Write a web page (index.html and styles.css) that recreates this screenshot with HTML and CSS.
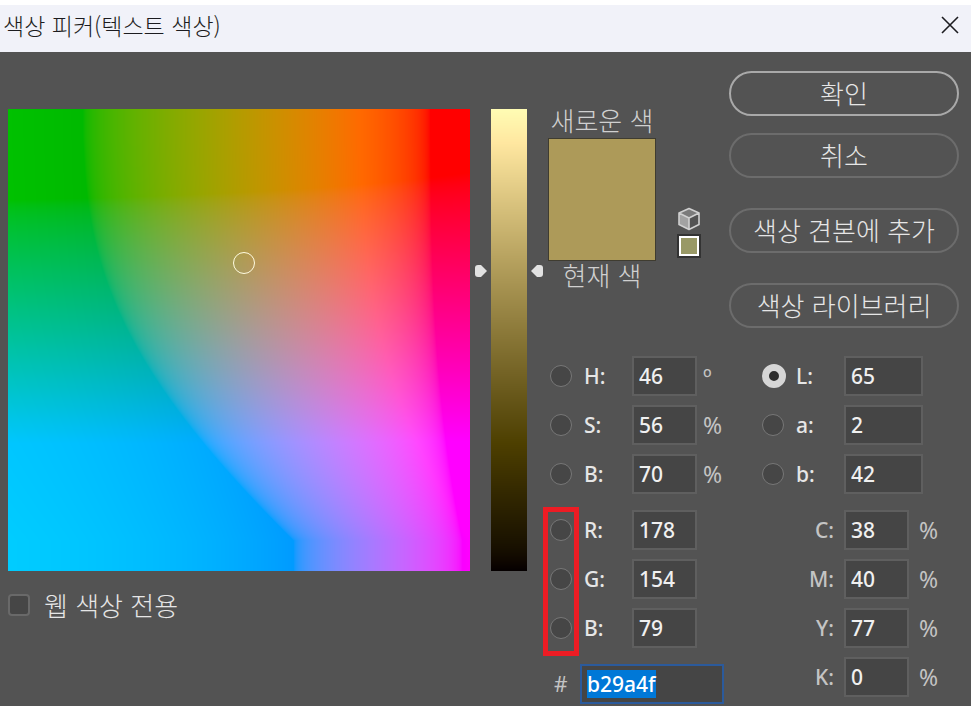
FILE: index.html
```html
<!DOCTYPE html>
<html lang="ko">
<head>
    <meta charset="UTF-8">
    <meta name="viewport" content="width=device-width, initial-scale=1.0">
    <title>색상 피커(텍스트 색상)</title>
    <link rel="stylesheet" href="styles.css">
</head>
<body>
    <header class="titlebar">
        <h1>색상 피커(텍스트 색상)</h1>
        <button class="close" type="button" aria-label="닫기">
            <svg width="18" height="18" viewBox="0 0 18 18"><path d="M1 1 17 17M17 1 1 17" fill="none" stroke="#1c1c20" stroke-width="1.6"/></svg>
        </button>
    </header>

    <main class="picker">
        <section class="field">
            <div class="spectrum">
                <canvas id="spectrum" width="462" height="462"></canvas>
                <span class="marker"></span>
            </div>
            <label class="web-only"><input type="checkbox"> 웹 색상 전용</label>
        </section>

        <section class="slider">
            <canvas id="lightness" width="1" height="462"></canvas>
            <svg class="arrow arrow-left" width="12" height="14" viewBox="0 0 12 14"><path d="M3 1h3l6 6-6 6H3Q0 13 0 10V4Q0 1 3 1z" fill="#e2e2e2"/></svg>
            <svg class="arrow arrow-right" width="12" height="14" viewBox="0 0 12 14"><path d="M9 1H6L0 7l6 6h3q3 0 3-3V4q0-3-3-3z" fill="#e2e2e2"/></svg>
        </section>

        <section class="side">
            <div class="top">
                <div class="preview">
                    <span>새로운 색</span>
                    <div class="swatch"></div>
                    <span>현재 색</span>
                </div>
                <div class="warning">
                    <svg width="24" height="24" viewBox="0 0 24 24">
                        <path d="M12 1.5 22 6v11.500L12 22.500 2 17.500V6z" fill="#535353"/>
                        <path d="M2 6l10 5v11.500L2 17.500z" fill="#a2a2a2"/>
                        <path d="M12 1.500 22 6l-10 5L2 6z" fill="#7b7b7b"/>
                        <path d="M12 1.500 22 6v11.500l-10 5-10-5V6zM2 6l10 5 10-5M12 11v11.500" fill="none" stroke="#d0d0d0" stroke-width="1.600" stroke-linejoin="round"/>
                    </svg>
                    <button class="web-swatch" type="button" aria-label="웹 색상"></button>
                </div>
                <div class="buttons">
                    <button class="primary" type="button">확인</button>
                    <button type="button">취소</button>
                    <button class="spaced" type="button">색상 견본에 추가</button>
                    <button class="spaced" type="button">색상 라이브러리</button>
                </div>
            </div>

            <form class="values">
                <div class="column">
                    <div class="group">
                        <div class="row"><input type="radio" name="mode" id="mh"><label for="mh">H:</label><input type="text" value="46" aria-label="H"><span>º</span></div>
                        <div class="row"><input type="radio" name="mode" id="ms"><label for="ms">S:</label><input type="text" value="56" aria-label="S"><span>%</span></div>
                        <div class="row"><input type="radio" name="mode" id="mv"><label for="mv">B:</label><input type="text" value="70" aria-label="B"><span>%</span></div>
                    </div>
                    <div class="group rgb">
                        <div class="row"><input type="radio" name="mode" id="mr"><label for="mr">R:</label><input type="text" value="178" aria-label="R"></div>
                        <div class="row"><input type="radio" name="mode" id="mg"><label for="mg">G:</label><input type="text" value="154" aria-label="G"></div>
                        <div class="row"><input type="radio" name="mode" id="mb"><label for="mb">B:</label><input type="text" value="79" aria-label="B"></div>
                        <span class="highlight"></span>
                    </div>
                    <div class="hex">
                        <label for="hex">#</label>
                        <input type="text" id="hex" value="b29a4f">
                    </div>
                </div>

                <div class="column">
                    <div class="group lab">
                        <div class="row"><input type="radio" name="mode" id="ml" checked><label for="ml">L:</label><input type="text" value="65" aria-label="L"></div>
                        <div class="row"><input type="radio" name="mode" id="ma"><label for="ma">a:</label><input type="text" value="2" aria-label="a"></div>
                        <div class="row"><input type="radio" name="mode" id="mlb"><label for="mlb">b:</label><input type="text" value="42" aria-label="b"></div>
                    </div>
                    <div class="group cmyk">
                        <div class="row"><label for="c">C:</label><input type="text" id="c" value="38"><span>%</span></div>
                        <div class="row"><label for="m">M:</label><input type="text" id="m" value="40"><span>%</span></div>
                        <div class="row"><label for="y">Y:</label><input type="text" id="y" value="77"><span>%</span></div>
                        <div class="row"><label for="k">K:</label><input type="text" id="k" value="0"><span>%</span></div>
                    </div>
                </div>
            </form>
        </section>
    </main>

    <script src="picker.js"></script>
</body>
</html>
```
FILE: styles.css
```css
* {
    box-sizing: border-box;
}

body {
    margin: 0;
    padding-top: 5px;
    min-height: 100vh;
    display: flex;
    flex-direction: column;
    background: #fff;
    color: #e6e6e6;
    font-family: "Noto Sans", "Noto Sans CJK KR", sans-serif;
    font-size: 21px;
}

button,
input {
    font: inherit;
    color: inherit;
    margin: 0;
}

/* title bar */
.titlebar {
    display: flex;
    align-items: center;
    justify-content: space-between;
    height: 47px;
    padding: 0 12px 8px 3px;
    background: #f1f2f9;
    color: #1c1c20;
}

.titlebar h1 {
    margin: 0;
    font-family: "Noto Sans CJK KR", sans-serif;
    font-size: 23px;
    font-weight: 300;
    line-height: 32px;
}

.close {
    display: flex;
    padding: 0;
    border: none;
    background: none;
}

.picker {
    flex: 1;
    display: grid;
    grid-template-columns: minmax(0, 1fr) 36px 411px;
    column-gap: 21px;
    align-items: start;
    padding: 19px 12px 0 8px;
    background: #535353;
}

/* spectrum */
.field,
.slider {
    margin-top: 38px;
}

.spectrum {
    position: relative;
}

canvas {
    display: block;
    width: 100%;
}

.marker {
    position: absolute;
    left: 51%;
    top: 33%;
    width: 22px;
    height: 22px;
    margin: -9px 0 0 -11px;
    border: 1px solid #fffbe0;
    border-radius: 50%;
}

.web-only {
    display: flex;
    align-items: center;
    gap: 14px;
    margin-top: 17px;
    font-family: "Noto Sans CJK KR", sans-serif;
    font-size: 26px;
    font-weight: 300;
    line-height: 34px;
}

.web-only input {
    appearance: none;
    width: 22px;
    height: 22px;
    border: 2px solid #696969;
    border-radius: 4px;
    background: #464646;
}

/* lightness bar */
.slider {
    position: relative;
}

.slider canvas {
    height: 462px;
}

.arrow {
    position: absolute;
    top: 35%;
    margin-top: -7px;
}

.arrow-left {
    right: 40px;
}

.arrow-right {
    left: 40px;
}

/* preview and buttons */
.top {
    display: grid;
    grid-template-columns: 108px 25px 230px;
    column-gap: 20px;
}

.buttons {
    margin-left: 8px;
    margin-right: -8px;
}

.preview {
    display: flex;
    flex-direction: column;
    align-items: center;
    padding-top: 35px;
    font-family: "Noto Sans CJK KR", sans-serif;
    font-size: 26px;
    font-weight: 300;
    line-height: 28px;
    white-space: nowrap;
    color: #d0d0d0;
}

.swatch {
    width: 108px;
    height: 123px;
    margin-top: 4px;
    border: 1px solid #3f3c30;
    background: #ad9a59;
}

.warning {
    display: flex;
    flex-direction: column;
    align-items: center;
    gap: 3px;
    padding-top: 136px;
}

.web-swatch {
    width: 24px;
    height: 24px;
    padding: 0;
    border: 2px solid #333;
    background: #999966;
    box-shadow: inset 0 0 0 2px #fff;
}

.buttons {
    display: flex;
    flex-direction: column;
    gap: 17px;
}

.buttons button {
    height: 45px;
    padding: 0 0 2px;
    border: 2px solid #6c6c6c;
    border-radius: 23px;
    background: none;
    font-family: "Noto Sans CJK KR", sans-serif;
    font-size: 26px;
    font-weight: 300;
    line-height: 34px;
    white-space: nowrap;
}

.buttons .primary {
    border-color: #a9a9a9;
}

.buttons .spaced {
    margin-top: 13px;
}

/* numeric values */
.values {
    display: grid;
    grid-template-columns: 212px 1fr;
    margin-top: 28px;
    padding-left: 2px;
    font-weight: 500;
}

.group {
    display: flex;
    flex-direction: column;
    gap: 9px;
    margin-bottom: 16px;
}

.row {
    display: grid;
    grid-template-columns: 34px 48px 71px auto;
    align-items: center;
    height: 40px;
}

.row span {
    color: #c4c4c4;
    font-size: 23px;
    font-weight: 400;
    line-height: 32px;
}

input[type="text"] {
    width: 65px;
    height: 40px;
    padding: 0 0 0 5px;
    border: 2px solid #5f5f5f;
    border-radius: 0;
    background: #454545;
    color: #f0f0f0;
    outline: none;
}

input[type="radio"] {
    appearance: none;
    width: 22px;
    height: 22px;
    border: 1px solid #777;
    border-radius: 50%;
    background: #464646;
}

input[type="radio"]:checked {
    width: 24px;
    height: 24px;
    border: 7px solid #d6d6d6;
    background: #2d2d2d;
}

.lab input[type="text"] {
    width: 79px;
}

.cmyk .row {
    grid-template-columns: 72px 65px auto;
    column-gap: 10px;
}

.cmyk label {
    text-align: right;
    color: #c4c4c4;
}

.rgb {
    position: relative;
}

.highlight {
    position: absolute;
    top: -3px;
    left: -7px;
    width: 36px;
    height: 149px;
    border: 5px solid #ed1c24;
    pointer-events: none;
}

.hex {
    display: flex;
    align-items: center;
    gap: 12px;
    padding-left: 4px;
}

.hex label {
    width: 14px;
    color: #c4c4c4;
    font-weight: 400;
}

.hex input[type="text"] {
    width: 144px;
    border-color: #2b5a9b;
}

.hex input::selection {
    background: #0078d7;
    color: #fff;
}
```
FILE: picker.js
```javascript
const current = { L: 65, a: 2, b: 42 };

function encode(v) {
    v = Math.min(1, Math.max(0, v));
    return 255 * (v <= 0.0031308 ? 12.92 * v : 1.055 * Math.pow(v, 1 / 2.4) - 0.055);
}

function decode(f) {
    f = Math.min(f, 1.253);
    return Math.max(0, f > 6 / 29 ? f * f * f : (f - 16 / 116) / 7.787);
}

// Lab (D50) to display RGB
function labToRgb(L, a, b) {
    const fy = (L + 16) / 116;
    const x = 0.9642 * decode(fy + a / 500);
    const y = decode(fy);
    const z = 0.8249 * decode(fy - b / 200);
    return [
        encode(2.414 * x - 0.985 * y - 0.415 * z),
        encode(-0.833 * x + 1.767 * y + 0.045 * z),
        encode(0.025 * x - 0.103 * y + 1.309 * z)
    ];
}

function paint(canvas, colorAt) {
    const ctx = canvas.getContext('2d');
    const image = ctx.createImageData(canvas.width, canvas.height);
    let i = 0;
    for (let y = 0; y < canvas.height; y++) {
        for (let x = 0; x < canvas.width; x++) {
            const [r, g, b] = colorAt(x / canvas.width, y / canvas.height);
            image.data[i++] = r;
            image.data[i++] = g;
            image.data[i++] = b;
            image.data[i++] = 255;
        }
    }
    ctx.putImageData(image, 0, 0);
}

paint(document.getElementById('spectrum'), (x, y) => labToRgb(current.L, x * 255 - 128, 127 - y * 255));
paint(document.getElementById('lightness'), (x, y) => labToRgb(100 - y * 100, current.a, current.b));

const hex = document.getElementById('hex');
hex.focus();
hex.select();
```
